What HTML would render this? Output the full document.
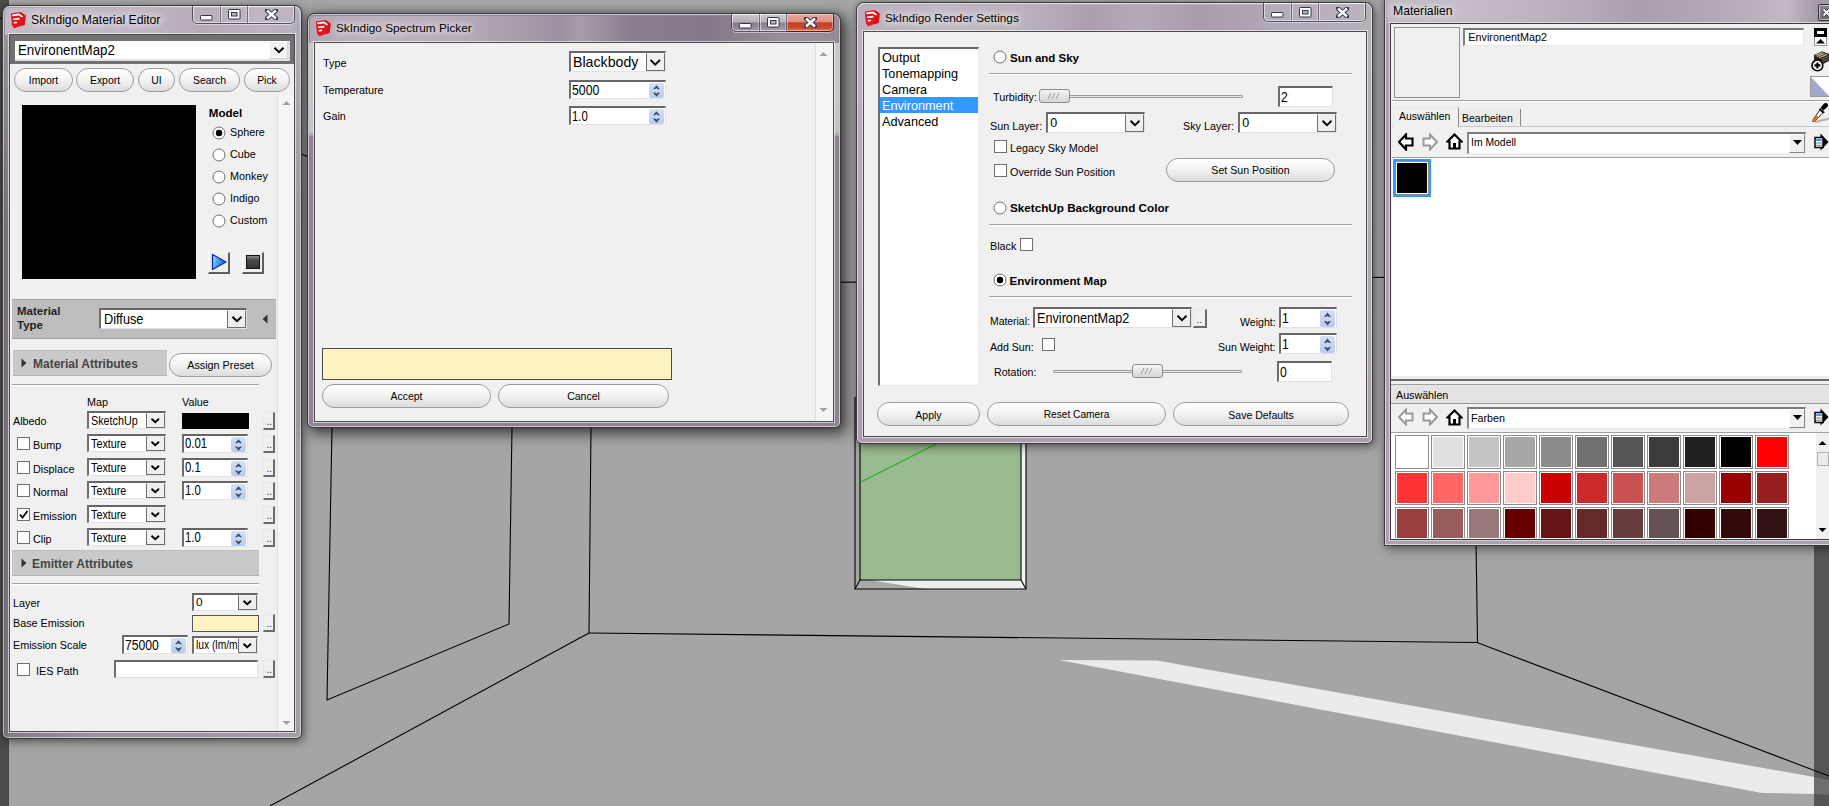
<!DOCTYPE html><html><head><meta charset="utf-8"><style>
html,body{margin:0;padding:0;width:1829px;height:806px;overflow:hidden;background:#a5a5a5;font-family:"Liberation Sans",sans-serif;}
div,svg{position:absolute;}
.t{white-space:nowrap;}
.a{position:absolute;}
.win{border-radius:7px 7px 5px 5px;box-shadow:0 0 0 1px #3c3c3c,2px 3px 10px 1px rgba(0,0,0,0.45),0 0 5px rgba(0,0,0,0.25);background:linear-gradient(90deg,rgba(255,255,255,0.0) 0%,rgba(255,255,255,0.18) 15%,rgba(255,255,255,0.0) 30%,rgba(255,255,255,0.12) 55%,rgba(255,255,255,0) 75%),#b6abb9;}
.win::before{content:"";position:absolute;left:0;top:0;right:0;bottom:0;border-radius:inherit;box-shadow:inset 0 0 0 1px rgba(255,255,255,0.55);}
.client{background:#f0f0f0;box-shadow:0 0 0 1px #4b4b4b,0 0 0 2px rgba(255,255,255,0.6);}
</style></head><body>
<svg class="a" style="left:0;top:0" width="1829" height="806" viewBox="0 0 1829 806">
<rect x="0" y="0" width="1829" height="806" fill="#a5a5a5"/>
<polygon points="1059,660 1157,660.5 1814,777 1814,794 1762,793" fill="#ebebeb"/>
<rect x="0" y="0" width="9" height="806" fill="#4a4a4a"/>
<rect x="1814" y="546" width="15" height="260" fill="#555"/>
<polygon points="1814,777 1829,780 1829,795 1814,794" fill="#6e6e6e"/>
<polygon points="860,440 1021,440 1021,580 860,580" fill="#9aba8f"/>
<polygon points="855,430 860,430 860,580 855,589" fill="#a5a5a5"/>
<polygon points="1021,440 1026,440 1026,589 1021,580" fill="#f2f2f2"/>
<polygon points="860,580 1021,580 1026,589 855,589" fill="#eeeeee"/>
<polygon points="860,580 870,580 925,589 856,589" fill="#a9a9a9"/>
<g stroke="#000" stroke-width="1.1" fill="none">
<polyline points="332,427 327,700 509,624 512,427"/>
<line x1="591" y1="427" x2="589" y2="633"/>
<polyline points="0,18 591,284.5 1476,276.5"/>
<line x1="589" y1="633" x2="270" y2="806"/>
<polyline points="589,633 1477,642.5 1829,776"/>
<line x1="1476" y1="540" x2="1477.5" y2="642.5"/>
<polyline points="855,397 855,589 1026,589 1026,440"/>
<polyline points="860,440 860,580 1021,580 1021,440"/>
<line x1="855" y1="589" x2="860" y2="580"/>
<line x1="1026" y1="589" x2="1021" y2="580"/>
</g>
<line x1="861" y1="482" x2="938" y2="443" stroke="#19b419" stroke-width="1.1"/>
</svg>
<div class="win" style="left:3px;top:6px;width:298px;height:732px;background:linear-gradient(180deg,rgba(255,255,255,0.3) 0,rgba(255,255,255,0.2) 60px,rgba(255,255,255,0) 220px),linear-gradient(90deg,#6c636f 0,#857a88 7px,#9d91a0 30%,#a69aa9 100%);"></div>
<div style="left:5px;top:8px;width:294px;height:27px;border-radius:5px 5px 0 0;background:linear-gradient(90deg,rgba(200,190,203,0.9) 0,#c3b9c5 40px,#bfb5c1 150px,#b5aab7 200px,#bdb3bf 260px,#b9aebb 100%);"></div>
<svg class="a" style="left:10px;top:11px" width="17" height="18" viewBox="0 0 17 18"><path d="M0.8 2.4 L10.5 1 L15.6 4.4 L14.8 13.8 L4.2 17.2 L2 14.2 Z" fill="#e8141c"/><path d="M10.5 1 L15.6 4.4 L14.8 13.8 L10.8 15 Z" fill="#d81018"/><path d="M2.2 3.4 L9.2 2.6 L13 5.2 L12.3 6.6 L8.6 4.6 L2.4 5.3 Z" fill="#fff"/><path d="M3 7.4 L9.3 6.8 L9.6 8.5 L3.2 9.1 Z" fill="#fff"/><path d="M3.6 10.9 L6.8 10.6 L6.9 12.2 L3.8 12.5 Z" fill="#fff"/></svg>
<div class="t" style="left:31px;top:13.67px;font-size:12.2px;line-height:12.2px;font-weight:normal;color:#000;text-shadow:0 0 6px rgba(255,255,255,0.9),0 0 10px rgba(255,255,255,0.8),0 0 14px rgba(255,255,255,0.6);">SkIndigo Material Editor</div>
<div style="left:192px;top:6px;width:103px;height:18px;border:1px solid rgba(50,45,60,0.75);border-top:none;border-radius:0 0 5px 5px;box-shadow:inset 0 0 0 1px rgba(255,255,255,0.55),0 1px 0 rgba(255,255,255,0.45);box-sizing:border-box;background:rgba(255,255,255,0.06);"></div>
<div style="left:220px;top:6px;width:1px;height:17px;background:rgba(50,45,60,0.55);box-shadow:1px 0 0 rgba(255,255,255,0.55),-1px 0 0 rgba(255,255,255,0.3);"></div>
<div style="left:247px;top:6px;width:1px;height:17px;background:rgba(50,45,60,0.55);box-shadow:1px 0 0 rgba(255,255,255,0.55),-1px 0 0 rgba(255,255,255,0.3);"></div>
<svg class="a" style="left:199.5px;top:14.8px" width="13" height="6" viewBox="0 0 13 6"><rect x="0.5" y="0.5" width="11.5" height="4.5" rx="0.8" fill="#fff" stroke="#353548" stroke-width="1"/></svg>
<svg class="a" style="left:227.5px;top:9.3px" width="13" height="11" viewBox="0 0 13 11"><rect x="0.5" y="0.5" width="11.5" height="9.5" rx="0.8" fill="#fff" stroke="#353548" stroke-width="1"/><rect x="3.5" y="3.5" width="5.5" height="3.5" fill="#b8b2bc" stroke="#353548" stroke-width="1"/></svg>
<svg class="a" style="left:265.0px;top:9.3px" width="13" height="11" viewBox="0 0 13 11"><path d="M2 1.5 L11 9.5 M11 1.5 L2 9.5" stroke="#353548" stroke-width="4.4" stroke-linecap="square"/><path d="M2 1.5 L11 9.5 M11 1.5 L2 9.5" stroke="#fff" stroke-width="2.4" stroke-linecap="butt"/></svg>
<div class="client" style="left:10px;top:35px;width:284px;height:696px;"></div>
<div style="left:10px;top:35px;width:284px;height:29px;background:#717171;"></div>
<div style="left:15px;top:41px;width:275px;height:20px;background:#fff;border-bottom:2px solid #e3e3e3;border-right:2px solid #e3e3e3;box-sizing:border-box;"></div>
<div style="left:269px;top:41px;width:19px;height:18px;background:#f3f3f3;border:1px solid #fff;border-right-color:#d5d5d5;border-bottom-color:#d5d5d5;box-sizing:border-box;display:flex;align-items:center;justify-content:center;"><svg width="12" height="8" viewBox="-1 -1 12 8"><path d="M0.5 0.8 L5.0 5.2 L9.5 0.8" fill="none" stroke="#000" stroke-width="2"/></svg></div>
<div class="t" style="left:17.8px;top:43.15px;font-size:14px;line-height:14px;font-weight:normal;color:#000;transform:scaleX(0.95);transform-origin:0 0;">EnvironentMap2</div>
<div style="left:14px;top:68px;width:59px;height:24px;border:1px solid #9c9c9c;border-radius:12px;background:linear-gradient(#ffffff 0%,#f4f4f4 45%,#dcdcdc 100%);box-sizing:border-box;"></div>
<div class="t" style="left:14.00px;width:59px;text-align:center;top:76.20px;font-size:10.4px;line-height:10.4px;font-weight:normal;color:#000">Import</div>
<div style="left:76px;top:68px;width:58px;height:24px;border:1px solid #9c9c9c;border-radius:12px;background:linear-gradient(#ffffff 0%,#f4f4f4 45%,#dcdcdc 100%);box-sizing:border-box;"></div>
<div class="t" style="left:76.00px;width:58px;text-align:center;top:76.20px;font-size:10.4px;line-height:10.4px;font-weight:normal;color:#000">Export</div>
<div style="left:138px;top:68px;width:37px;height:24px;border:1px solid #9c9c9c;border-radius:12px;background:linear-gradient(#ffffff 0%,#f4f4f4 45%,#dcdcdc 100%);box-sizing:border-box;"></div>
<div class="t" style="left:138.00px;width:37px;text-align:center;top:76.20px;font-size:10.4px;line-height:10.4px;font-weight:normal;color:#000">UI</div>
<div style="left:179px;top:68px;width:61px;height:24px;border:1px solid #9c9c9c;border-radius:12px;background:linear-gradient(#ffffff 0%,#f4f4f4 45%,#dcdcdc 100%);box-sizing:border-box;"></div>
<div class="t" style="left:179.00px;width:61px;text-align:center;top:76.20px;font-size:10.4px;line-height:10.4px;font-weight:normal;color:#000">Search</div>
<div style="left:244px;top:68px;width:46px;height:24px;border:1px solid #9c9c9c;border-radius:12px;background:linear-gradient(#ffffff 0%,#f4f4f4 45%,#dcdcdc 100%);box-sizing:border-box;"></div>
<div class="t" style="left:244.00px;width:46px;text-align:center;top:76.20px;font-size:10.4px;line-height:10.4px;font-weight:normal;color:#000">Pick</div>
<div style="left:277px;top:95px;width:17px;height:636px;background:#f5f5f5;border-left:1px solid #e2e2e2;box-sizing:border-box;"></div>
<svg class="a" style="left:282px;top:100px" width="9" height="6" viewBox="0 0 9 6"><path d="M0.5 5 L4.5 1 L8.5 5 Z" fill="#a0a0a0"/></svg>
<svg class="a" style="left:282px;top:720px" width="9" height="6" viewBox="0 0 9 6"><path d="M0.5 1 L4.5 5 L8.5 1 Z" fill="#a0a0a0"/></svg>
<div style="left:22px;top:105px;width:174px;height:174px;background:#000;"></div>
<div class="t" style="left:208.8px;top:107.18px;font-size:11.6px;line-height:11.6px;font-weight:bold;color:#000;">Model</div>
<div style="left:211.5px;top:126px;width:14px;height:14px;"><svg width="14" height="14" viewBox="0 0 14 14"><circle cx="7" cy="7" r="6" fill="#fff" stroke="#6f6f6f" stroke-width="1"/><circle cx="7" cy="7" r="3.2" fill="#000"/></svg></div>
<div class="t" style="left:230px;top:127.06px;font-size:10.8px;line-height:10.8px;font-weight:normal;color:#000;">Sphere</div>
<div style="left:211.5px;top:148px;width:14px;height:14px;"><svg width="14" height="14" viewBox="0 0 14 14"><circle cx="7" cy="7" r="6" fill="#fff" stroke="#6f6f6f" stroke-width="1"/></svg></div>
<div class="t" style="left:230px;top:149.06px;font-size:10.8px;line-height:10.8px;font-weight:normal;color:#000;">Cube</div>
<div style="left:211.5px;top:170px;width:14px;height:14px;"><svg width="14" height="14" viewBox="0 0 14 14"><circle cx="7" cy="7" r="6" fill="#fff" stroke="#6f6f6f" stroke-width="1"/></svg></div>
<div class="t" style="left:230px;top:171.06px;font-size:10.8px;line-height:10.8px;font-weight:normal;color:#000;">Monkey</div>
<div style="left:211.5px;top:192px;width:14px;height:14px;"><svg width="14" height="14" viewBox="0 0 14 14"><circle cx="7" cy="7" r="6" fill="#fff" stroke="#6f6f6f" stroke-width="1"/></svg></div>
<div class="t" style="left:230px;top:193.06px;font-size:10.8px;line-height:10.8px;font-weight:normal;color:#000;">Indigo</div>
<div style="left:211.5px;top:214px;width:14px;height:14px;"><svg width="14" height="14" viewBox="0 0 14 14"><circle cx="7" cy="7" r="6" fill="#fff" stroke="#6f6f6f" stroke-width="1"/></svg></div>
<div class="t" style="left:230px;top:215.06px;font-size:10.8px;line-height:10.8px;font-weight:normal;color:#000;">Custom</div>
<div style="left:208px;top:252px;width:22px;height:22px;background:#f0f0f0;border:1px solid #fafafa;border-right:2px solid #5e5e5e;border-bottom:2px solid #5e5e5e;box-sizing:border-box;"></div>
<svg class="a" style="left:211px;top:253px" width="17" height="18" viewBox="0 0 17 18"><defs><linearGradient id="pg" x1="0" y1="0" x2="1" y2="0.3"><stop offset="0" stop-color="#bfe2ff"/><stop offset="0.45" stop-color="#4aa2f8"/><stop offset="1" stop-color="#1d6ee0"/></linearGradient></defs><path d="M1.5 1.5 L15 9 L1.5 16.5 Z" fill="url(#pg)" stroke="#0b2e9c" stroke-width="1.3" stroke-linejoin="round"/></svg>
<div style="left:242px;top:252px;width:22px;height:22px;background:#f0f0f0;border:1px solid #fafafa;border-right:2px solid #5e5e5e;border-bottom:2px solid #5e5e5e;box-sizing:border-box;"></div>
<div style="left:246px;top:255px;width:14px;height:14px;background:linear-gradient(#8a8a8a 0,#4a4a4a 35%,#333 100%);border:1px solid #111;box-sizing:border-box;"></div>
<div style="left:12px;top:299px;width:264px;height:40px;background:#bdbdbd;border-top:1px solid #a5a5a5;border-bottom:1px solid #a0a0a0;box-sizing:border-box;"></div>
<div class="t" style="left:17px;top:306.27px;font-size:11.5px;line-height:11.5px;font-weight:bold;color:#222;">Material</div>
<div class="t" style="left:17px;top:320.27px;font-size:11.5px;line-height:11.5px;font-weight:bold;color:#222;">Type</div>
<div style="left:99px;top:308px;width:148px;height:21px;background:#fff;border-top:2px solid #666;border-left:2px solid #6e6e6e;border-bottom:1px solid #e2e2e2;border-right:1px solid #e2e2e2;box-sizing:border-box;"></div>
<div style="left:227px;top:310px;width:19px;height:18px;background:#efefef;border:1px solid #6e6e6e;border-top-color:#f4f4f4;box-sizing:border-box;display:flex;align-items:center;justify-content:center;"><svg width="12" height="8" viewBox="-1 -1 12 8"><path d="M0.5 0.8 L5.0 5.2 L9.5 0.8" fill="none" stroke="#000" stroke-width="1.9"/></svg></div>
<div class="t" style="left:103.5px;top:311.75px;font-size:14px;line-height:14px;font-weight:normal;color:#000;transform:scaleX(0.91);transform-origin:0 0;">Diffuse</div>
<svg class="a" style="left:262px;top:314px" width="6" height="10" viewBox="0 0 6 10"><path d="M5.5 0.5 L0.5 5 L5.5 9.5 Z" fill="#333"/></svg>
<div style="left:13px;top:350px;width:154px;height:26px;background:#c9c9c9;border-top:1px solid #bdbdbd;border-bottom:1px solid #b5b5b5;box-sizing:border-box;"></div>
<svg class="a" style="left:21px;top:358px" width="6" height="10" viewBox="0 0 6 10"><path d="M0.5 0.5 L5.5 5 L0.5 9.5 Z" fill="#333"/></svg>
<div class="t" style="left:33px;top:357.84px;font-size:12px;line-height:12px;font-weight:bold;color:#444;">Material Attributes</div>
<div style="left:169px;top:353px;width:103px;height:24px;border:1px solid #9c9c9c;border-radius:12px;background:linear-gradient(#ffffff 0%,#f4f4f4 45%,#dcdcdc 100%);box-sizing:border-box;"></div>
<div class="t" style="left:169.00px;width:103px;text-align:center;top:359.86px;font-size:10.8px;line-height:10.8px;font-weight:normal;color:#000">Assign Preset</div>
<div style="left:12px;top:384px;width:247px;height:1px;background:#a0a0a0;box-shadow:0 1px 0 #fff;"></div>
<div class="t" style="left:87px;top:396.86px;font-size:10.8px;line-height:10.8px;font-weight:normal;color:#000;">Map</div>
<div class="t" style="left:182px;top:396.86px;font-size:10.8px;line-height:10.8px;font-weight:normal;color:#000;">Value</div>
<div class="t" style="left:13px;top:415.86px;font-size:10.8px;line-height:10.8px;font-weight:normal;color:#000;">Albedo</div>
<div style="left:87px;top:411px;width:79px;height:18px;background:#fff;border-top:2px solid #666;border-left:2px solid #6e6e6e;border-bottom:1px solid #e2e2e2;border-right:1px solid #e2e2e2;box-sizing:border-box;"></div>
<div style="left:146px;top:413px;width:19px;height:15px;background:#efefef;border:1px solid #6e6e6e;border-top-color:#f4f4f4;box-sizing:border-box;display:flex;align-items:center;justify-content:center;"><svg width="10.5" height="7" viewBox="-1 -1 10.5 7"><path d="M0.5 0.8 L4.25 4.2 L8.0 0.8" fill="none" stroke="#000" stroke-width="1.9"/></svg></div>
<div class="t" style="left:91.3px;top:414.50px;font-size:12.4px;line-height:12.4px;font-weight:normal;color:#000;transform:scaleX(0.87);transform-origin:0 0;">SketchUp</div>
<div style="left:182px;top:413px;width:67px;height:16px;background:#000;"></div>
<div style="left:263px;top:412px;width:12px;height:18px;background:#f0f0f0;border-top:1px solid #e9e9e9;border-left:1px solid #e9e9e9;border-right:2px solid #6a6a6a;border-bottom:2px solid #6a6a6a;box-sizing:border-box;"></div>
<div class="t" style="left:266.5px;top:416.54px;font-size:10px;line-height:10px;font-weight:normal;color:#402060;">..</div>
<div style="left:17px;top:437px;width:13px;height:13px;background:#fff;border:1px solid #6f6f6f;box-sizing:border-box;"></div>
<div class="t" style="left:33px;top:439.86px;font-size:10.8px;line-height:10.8px;font-weight:normal;color:#000;">Bump</div>
<div style="left:87px;top:434px;width:79px;height:18px;background:#fff;border-top:2px solid #666;border-left:2px solid #6e6e6e;border-bottom:1px solid #e2e2e2;border-right:1px solid #e2e2e2;box-sizing:border-box;"></div>
<div style="left:146px;top:436px;width:19px;height:15px;background:#efefef;border:1px solid #6e6e6e;border-top-color:#f4f4f4;box-sizing:border-box;display:flex;align-items:center;justify-content:center;"><svg width="10.5" height="7" viewBox="-1 -1 10.5 7"><path d="M0.5 0.8 L4.25 4.2 L8.0 0.8" fill="none" stroke="#000" stroke-width="1.9"/></svg></div>
<div class="t" style="left:91.3px;top:437.50px;font-size:12.4px;line-height:12.4px;font-weight:normal;color:#000;transform:scaleX(0.87);transform-origin:0 0;">Texture</div>
<div style="left:182px;top:434px;width:66px;height:19px;background:#fff;border-top:2px solid #666;border-left:2px solid #6e6e6e;border-bottom:1px solid #e2e2e2;border-right:1px solid #e2e2e2;box-sizing:border-box;"></div>
<div style="left:231px;top:437px;width:15px;height:15px;"><svg width="15" height="15" viewBox="0 0 15 15"><defs><linearGradient id="sg" x1="0" y1="0" x2="0" y2="1"><stop offset="0" stop-color="#d3e0f8"/><stop offset="1" stop-color="#b7cbf0"/></linearGradient></defs><rect x="0" y="0" width="15" height="15" rx="2" fill="url(#sg)"/><path d="M4 6.3 L7.5 2.2 L11 6.3 L9.3 6.3 L7.5 5.3 L5.7 6.3 Z" fill="#3d4b66"/><path d="M4 9.6 L7.5 13.7 L11 9.6 L9.3 9.6 L7.5 10.6 L5.7 9.6 Z" fill="#3d4b66"/></svg></div>
<div class="t" style="left:185px;top:436.15px;font-size:14px;line-height:14px;font-weight:normal;color:#000;transform:scaleX(0.81);transform-origin:0 0;">0.01</div>
<div style="left:263px;top:435px;width:12px;height:18px;background:#f0f0f0;border-top:1px solid #e9e9e9;border-left:1px solid #e9e9e9;border-right:2px solid #6a6a6a;border-bottom:2px solid #6a6a6a;box-sizing:border-box;"></div>
<div class="t" style="left:266.5px;top:439.54px;font-size:10px;line-height:10px;font-weight:normal;color:#402060;">..</div>
<div style="left:17px;top:461px;width:13px;height:13px;background:#fff;border:1px solid #6f6f6f;box-sizing:border-box;"></div>
<div class="t" style="left:33px;top:463.86px;font-size:10.8px;line-height:10.8px;font-weight:normal;color:#000;">Displace</div>
<div style="left:87px;top:458px;width:79px;height:18px;background:#fff;border-top:2px solid #666;border-left:2px solid #6e6e6e;border-bottom:1px solid #e2e2e2;border-right:1px solid #e2e2e2;box-sizing:border-box;"></div>
<div style="left:146px;top:460px;width:19px;height:15px;background:#efefef;border:1px solid #6e6e6e;border-top-color:#f4f4f4;box-sizing:border-box;display:flex;align-items:center;justify-content:center;"><svg width="10.5" height="7" viewBox="-1 -1 10.5 7"><path d="M0.5 0.8 L4.25 4.2 L8.0 0.8" fill="none" stroke="#000" stroke-width="1.9"/></svg></div>
<div class="t" style="left:91.3px;top:461.50px;font-size:12.4px;line-height:12.4px;font-weight:normal;color:#000;transform:scaleX(0.87);transform-origin:0 0;">Texture</div>
<div style="left:182px;top:458px;width:66px;height:19px;background:#fff;border-top:2px solid #666;border-left:2px solid #6e6e6e;border-bottom:1px solid #e2e2e2;border-right:1px solid #e2e2e2;box-sizing:border-box;"></div>
<div style="left:231px;top:461px;width:15px;height:15px;"><svg width="15" height="15" viewBox="0 0 15 15"><defs><linearGradient id="sg" x1="0" y1="0" x2="0" y2="1"><stop offset="0" stop-color="#d3e0f8"/><stop offset="1" stop-color="#b7cbf0"/></linearGradient></defs><rect x="0" y="0" width="15" height="15" rx="2" fill="url(#sg)"/><path d="M4 6.3 L7.5 2.2 L11 6.3 L9.3 6.3 L7.5 5.3 L5.7 6.3 Z" fill="#3d4b66"/><path d="M4 9.6 L7.5 13.7 L11 9.6 L9.3 9.6 L7.5 10.6 L5.7 9.6 Z" fill="#3d4b66"/></svg></div>
<div class="t" style="left:185px;top:460.15px;font-size:14px;line-height:14px;font-weight:normal;color:#000;transform:scaleX(0.81);transform-origin:0 0;">0.1</div>
<div style="left:263px;top:459px;width:12px;height:18px;background:#f0f0f0;border-top:1px solid #e9e9e9;border-left:1px solid #e9e9e9;border-right:2px solid #6a6a6a;border-bottom:2px solid #6a6a6a;box-sizing:border-box;"></div>
<div class="t" style="left:266.5px;top:463.54px;font-size:10px;line-height:10px;font-weight:normal;color:#402060;">..</div>
<div style="left:17px;top:484px;width:13px;height:13px;background:#fff;border:1px solid #6f6f6f;box-sizing:border-box;"></div>
<div class="t" style="left:33px;top:486.86px;font-size:10.8px;line-height:10.8px;font-weight:normal;color:#000;">Normal</div>
<div style="left:87px;top:481px;width:79px;height:18px;background:#fff;border-top:2px solid #666;border-left:2px solid #6e6e6e;border-bottom:1px solid #e2e2e2;border-right:1px solid #e2e2e2;box-sizing:border-box;"></div>
<div style="left:146px;top:483px;width:19px;height:15px;background:#efefef;border:1px solid #6e6e6e;border-top-color:#f4f4f4;box-sizing:border-box;display:flex;align-items:center;justify-content:center;"><svg width="10.5" height="7" viewBox="-1 -1 10.5 7"><path d="M0.5 0.8 L4.25 4.2 L8.0 0.8" fill="none" stroke="#000" stroke-width="1.9"/></svg></div>
<div class="t" style="left:91.3px;top:484.50px;font-size:12.4px;line-height:12.4px;font-weight:normal;color:#000;transform:scaleX(0.87);transform-origin:0 0;">Texture</div>
<div style="left:182px;top:481px;width:66px;height:19px;background:#fff;border-top:2px solid #666;border-left:2px solid #6e6e6e;border-bottom:1px solid #e2e2e2;border-right:1px solid #e2e2e2;box-sizing:border-box;"></div>
<div style="left:231px;top:484px;width:15px;height:15px;"><svg width="15" height="15" viewBox="0 0 15 15"><defs><linearGradient id="sg" x1="0" y1="0" x2="0" y2="1"><stop offset="0" stop-color="#d3e0f8"/><stop offset="1" stop-color="#b7cbf0"/></linearGradient></defs><rect x="0" y="0" width="15" height="15" rx="2" fill="url(#sg)"/><path d="M4 6.3 L7.5 2.2 L11 6.3 L9.3 6.3 L7.5 5.3 L5.7 6.3 Z" fill="#3d4b66"/><path d="M4 9.6 L7.5 13.7 L11 9.6 L9.3 9.6 L7.5 10.6 L5.7 9.6 Z" fill="#3d4b66"/></svg></div>
<div class="t" style="left:185px;top:483.15px;font-size:14px;line-height:14px;font-weight:normal;color:#000;transform:scaleX(0.81);transform-origin:0 0;">1.0</div>
<div style="left:263px;top:482px;width:12px;height:18px;background:#f0f0f0;border-top:1px solid #e9e9e9;border-left:1px solid #e9e9e9;border-right:2px solid #6a6a6a;border-bottom:2px solid #6a6a6a;box-sizing:border-box;"></div>
<div class="t" style="left:266.5px;top:486.54px;font-size:10px;line-height:10px;font-weight:normal;color:#402060;">..</div>
<div style="left:17px;top:508px;width:13px;height:13px;background:#fff;border:1px solid #6f6f6f;box-sizing:border-box;"><svg width="13" height="13" viewBox="0 0 13 13" style="position:absolute;left:-1px;top:-1px"><path d="M3 6.5 L5.5 9.5 L10.5 3" fill="none" stroke="#000" stroke-width="1.8"/></svg></div>
<div class="t" style="left:33px;top:510.86px;font-size:10.8px;line-height:10.8px;font-weight:normal;color:#000;">Emission</div>
<div style="left:87px;top:505px;width:79px;height:18px;background:#fff;border-top:2px solid #666;border-left:2px solid #6e6e6e;border-bottom:1px solid #e2e2e2;border-right:1px solid #e2e2e2;box-sizing:border-box;"></div>
<div style="left:146px;top:507px;width:19px;height:15px;background:#efefef;border:1px solid #6e6e6e;border-top-color:#f4f4f4;box-sizing:border-box;display:flex;align-items:center;justify-content:center;"><svg width="10.5" height="7" viewBox="-1 -1 10.5 7"><path d="M0.5 0.8 L4.25 4.2 L8.0 0.8" fill="none" stroke="#000" stroke-width="1.9"/></svg></div>
<div class="t" style="left:91.3px;top:508.50px;font-size:12.4px;line-height:12.4px;font-weight:normal;color:#000;transform:scaleX(0.87);transform-origin:0 0;">Texture</div>
<div style="left:263px;top:506px;width:12px;height:18px;background:#f0f0f0;border-top:1px solid #e9e9e9;border-left:1px solid #e9e9e9;border-right:2px solid #6a6a6a;border-bottom:2px solid #6a6a6a;box-sizing:border-box;"></div>
<div class="t" style="left:266.5px;top:510.54px;font-size:10px;line-height:10px;font-weight:normal;color:#402060;">..</div>
<div style="left:17px;top:531px;width:13px;height:13px;background:#fff;border:1px solid #6f6f6f;box-sizing:border-box;"></div>
<div class="t" style="left:33px;top:533.86px;font-size:10.8px;line-height:10.8px;font-weight:normal;color:#000;">Clip</div>
<div style="left:87px;top:528px;width:79px;height:18px;background:#fff;border-top:2px solid #666;border-left:2px solid #6e6e6e;border-bottom:1px solid #e2e2e2;border-right:1px solid #e2e2e2;box-sizing:border-box;"></div>
<div style="left:146px;top:530px;width:19px;height:15px;background:#efefef;border:1px solid #6e6e6e;border-top-color:#f4f4f4;box-sizing:border-box;display:flex;align-items:center;justify-content:center;"><svg width="10.5" height="7" viewBox="-1 -1 10.5 7"><path d="M0.5 0.8 L4.25 4.2 L8.0 0.8" fill="none" stroke="#000" stroke-width="1.9"/></svg></div>
<div class="t" style="left:91.3px;top:531.50px;font-size:12.4px;line-height:12.4px;font-weight:normal;color:#000;transform:scaleX(0.87);transform-origin:0 0;">Texture</div>
<div style="left:182px;top:528px;width:66px;height:19px;background:#fff;border-top:2px solid #666;border-left:2px solid #6e6e6e;border-bottom:1px solid #e2e2e2;border-right:1px solid #e2e2e2;box-sizing:border-box;"></div>
<div style="left:231px;top:531px;width:15px;height:15px;"><svg width="15" height="15" viewBox="0 0 15 15"><defs><linearGradient id="sg" x1="0" y1="0" x2="0" y2="1"><stop offset="0" stop-color="#d3e0f8"/><stop offset="1" stop-color="#b7cbf0"/></linearGradient></defs><rect x="0" y="0" width="15" height="15" rx="2" fill="url(#sg)"/><path d="M4 6.3 L7.5 2.2 L11 6.3 L9.3 6.3 L7.5 5.3 L5.7 6.3 Z" fill="#3d4b66"/><path d="M4 9.6 L7.5 13.7 L11 9.6 L9.3 9.6 L7.5 10.6 L5.7 9.6 Z" fill="#3d4b66"/></svg></div>
<div class="t" style="left:185px;top:530.15px;font-size:14px;line-height:14px;font-weight:normal;color:#000;transform:scaleX(0.81);transform-origin:0 0;">1.0</div>
<div style="left:263px;top:529px;width:12px;height:18px;background:#f0f0f0;border-top:1px solid #e9e9e9;border-left:1px solid #e9e9e9;border-right:2px solid #6a6a6a;border-bottom:2px solid #6a6a6a;box-sizing:border-box;"></div>
<div class="t" style="left:266.5px;top:533.53px;font-size:10px;line-height:10px;font-weight:normal;color:#402060;">..</div>
<div style="left:12px;top:550px;width:247px;height:26px;background:#c9c9c9;border-top:1px solid #bdbdbd;border-bottom:1px solid #b5b5b5;box-sizing:border-box;"></div>
<svg class="a" style="left:21px;top:558px" width="6" height="10" viewBox="0 0 6 10"><path d="M0.5 0.5 L5.5 5 L0.5 9.5 Z" fill="#333"/></svg>
<div class="t" style="left:32px;top:557.84px;font-size:12px;line-height:12px;font-weight:bold;color:#444;">Emitter Attributes</div>
<div style="left:12px;top:583px;width:247px;height:1px;background:#a0a0a0;box-shadow:0 1px 0 #fff;"></div>
<div class="t" style="left:13px;top:597.86px;font-size:10.8px;line-height:10.8px;font-weight:normal;color:#000;">Layer</div>
<div style="left:192px;top:593px;width:66px;height:18px;background:#fff;border-top:2px solid #666;border-left:2px solid #6e6e6e;border-bottom:1px solid #e2e2e2;border-right:1px solid #e2e2e2;box-sizing:border-box;"></div>
<div style="left:238px;top:595px;width:19px;height:15px;background:#efefef;border:1px solid #6e6e6e;border-top-color:#f4f4f4;box-sizing:border-box;display:flex;align-items:center;justify-content:center;"><svg width="10.5" height="7" viewBox="-1 -1 10.5 7"><path d="M0.5 0.8 L4.25 4.2 L8.0 0.8" fill="none" stroke="#000" stroke-width="1.9"/></svg></div>
<div class="t" style="left:196px;top:596.51px;font-size:11.8px;line-height:11.8px;font-weight:normal;color:#000;">0</div>
<div class="t" style="left:13px;top:617.86px;font-size:10.8px;line-height:10.8px;font-weight:normal;color:#000;">Base Emission</div>
<div style="left:192px;top:615px;width:67px;height:17px;background:#fff2c2;border:1px solid #555;box-sizing:border-box;"></div>
<div style="left:263px;top:614px;width:12px;height:18px;background:#f0f0f0;border-top:1px solid #e9e9e9;border-left:1px solid #e9e9e9;border-right:2px solid #6a6a6a;border-bottom:2px solid #6a6a6a;box-sizing:border-box;"></div>
<div class="t" style="left:266.5px;top:618.53px;font-size:10px;line-height:10px;font-weight:normal;color:#402060;">..</div>
<div class="t" style="left:13px;top:639.86px;font-size:10.8px;line-height:10.8px;font-weight:normal;color:#000;">Emission Scale</div>
<div style="left:122px;top:635px;width:66px;height:19px;background:#fff;border-top:2px solid #666;border-left:2px solid #6e6e6e;border-bottom:1px solid #e2e2e2;border-right:1px solid #e2e2e2;box-sizing:border-box;"></div>
<div style="left:171px;top:638px;width:15px;height:15px;"><svg width="15" height="15" viewBox="0 0 15 15"><defs><linearGradient id="sg" x1="0" y1="0" x2="0" y2="1"><stop offset="0" stop-color="#d3e0f8"/><stop offset="1" stop-color="#b7cbf0"/></linearGradient></defs><rect x="0" y="0" width="15" height="15" rx="2" fill="url(#sg)"/><path d="M4 6.3 L7.5 2.2 L11 6.3 L9.3 6.3 L7.5 5.3 L5.7 6.3 Z" fill="#3d4b66"/><path d="M4 9.6 L7.5 13.7 L11 9.6 L9.3 9.6 L7.5 10.6 L5.7 9.6 Z" fill="#3d4b66"/></svg></div>
<div class="t" style="left:125px;top:637.95px;font-size:14px;line-height:14px;font-weight:normal;color:#000;transform:scaleX(0.87);transform-origin:0 0;">75000</div>
<div style="left:192px;top:636px;width:66px;height:18px;background:#fff;border-top:2px solid #666;border-left:2px solid #6e6e6e;border-bottom:1px solid #e2e2e2;border-right:1px solid #e2e2e2;box-sizing:border-box;"></div>
<div style="left:238px;top:638px;width:19px;height:15px;background:#efefef;border:1px solid #6e6e6e;border-top-color:#f4f4f4;box-sizing:border-box;display:flex;align-items:center;justify-content:center;"><svg width="10.5" height="7" viewBox="-1 -1 10.5 7"><path d="M0.5 0.8 L4.25 4.2 L8.0 0.8" fill="none" stroke="#000" stroke-width="1.9"/></svg></div>
<div class="t" style="left:195.6px;top:639.22px;font-size:12.5px;line-height:12.5px;font-weight:normal;color:#000;transform:scaleX(0.82);transform-origin:0 0;">lux (lm/m</div>
<div style="left:17px;top:663px;width:13px;height:13px;background:#fff;border:1px solid #6f6f6f;box-sizing:border-box;"></div>
<div class="t" style="left:36px;top:665.86px;font-size:10.8px;line-height:10.8px;font-weight:normal;color:#000;">IES Path</div>
<div style="left:114px;top:660px;width:144px;height:18px;background:#fff;border-top:2px solid #666;border-left:2px solid #6e6e6e;border-bottom:1px solid #e2e2e2;border-right:1px solid #e2e2e2;box-sizing:border-box;"></div>
<div style="left:263px;top:660px;width:12px;height:18px;background:#f0f0f0;border-top:1px solid #e9e9e9;border-left:1px solid #e9e9e9;border-right:2px solid #6a6a6a;border-bottom:2px solid #6a6a6a;box-sizing:border-box;"></div>
<div class="t" style="left:266.5px;top:664.53px;font-size:10px;line-height:10px;font-weight:normal;color:#402060;">..</div>
<div class="win" style="left:308px;top:14px;width:532px;height:413px;box-shadow:0 0 0 1px #3a3a3a,4px 4px 14px 3px rgba(0,0,0,0.6),0 0 6px rgba(0,0,0,0.3);background:#8f8292;"></div>
<div style="left:310px;top:16px;width:528px;height:27px;border-radius:5px 5px 0 0;background:linear-gradient(90deg,#b3a8b5 0,#bcb2be 60px,#b6abb8 150px,#9d90a0 250px,#a89cab 270px,#8a7d8d 320px,#857888 400px,#9a8e9c 480px,#978a99 100%);"></div>
<div style="left:309px;top:43px;width:5px;height:93px;background:linear-gradient(180deg,rgba(255,255,255,0.55),rgba(255,255,255,0.5) 95%,rgba(255,255,255,0.2));"></div>
<div style="left:834px;top:43px;width:5px;height:93px;background:linear-gradient(180deg,rgba(255,255,255,0.55),rgba(255,255,255,0.5) 95%,rgba(255,255,255,0.2));"></div>
<svg class="a" style="left:315px;top:19px" width="17" height="18" viewBox="0 0 17 18"><path d="M0.8 2.4 L10.5 1 L15.6 4.4 L14.8 13.8 L4.2 17.2 L2 14.2 Z" fill="#e8141c"/><path d="M10.5 1 L15.6 4.4 L14.8 13.8 L10.8 15 Z" fill="#d81018"/><path d="M2.2 3.4 L9.2 2.6 L13 5.2 L12.3 6.6 L8.6 4.6 L2.4 5.3 Z" fill="#fff"/><path d="M3 7.4 L9.3 6.8 L9.6 8.5 L3.2 9.1 Z" fill="#fff"/><path d="M3.6 10.9 L6.8 10.6 L6.9 12.2 L3.8 12.5 Z" fill="#fff"/></svg>
<div class="t" style="left:336px;top:23.01px;font-size:11.8px;line-height:11.8px;font-weight:normal;color:#000;text-shadow:0 0 6px rgba(255,255,255,0.9),0 0 10px rgba(255,255,255,0.8),0 0 14px rgba(255,255,255,0.6);">SkIndigo Spectrum Picker</div>
<div style="left:731px;top:14px;width:103px;height:18px;border:1px solid rgba(50,45,60,0.75);border-top:none;border-radius:0 0 5px 5px;box-shadow:inset 0 0 0 1px rgba(255,255,255,0.55),0 1px 0 rgba(255,255,255,0.45);box-sizing:border-box;background:linear-gradient(180deg,rgba(255,255,255,0.55) 0,rgba(255,255,255,0.35) 48%,rgba(60,50,70,0.12) 52%,rgba(255,255,255,0.15) 100%);"></div>
<div style="left:759px;top:14px;width:1px;height:17px;background:rgba(50,45,60,0.55);box-shadow:1px 0 0 rgba(255,255,255,0.55),-1px 0 0 rgba(255,255,255,0.3);"></div>
<div style="left:786px;top:14px;width:1px;height:17px;background:rgba(50,45,60,0.55);box-shadow:1px 0 0 rgba(255,255,255,0.55),-1px 0 0 rgba(255,255,255,0.3);"></div>
<div style="left:787px;top:14px;width:47px;height:18px;border-radius:0 0 5px 0;background:linear-gradient(180deg,#e9aa9e 0,#dc8f80 45%,#c2402a 52%,#c8472d 80%,#e27a5a 100%);border:1px solid #5a1a12;border-top:none;border-left:none;box-sizing:border-box;box-shadow:inset 0 0 0 1px rgba(255,230,220,0.5);"></div>
<svg class="a" style="left:738.5px;top:22.8px" width="13" height="6" viewBox="0 0 13 6"><rect x="0.5" y="0.5" width="11.5" height="4.5" rx="0.8" fill="#fff" stroke="#353548" stroke-width="1"/></svg>
<svg class="a" style="left:766.5px;top:17.3px" width="13" height="11" viewBox="0 0 13 11"><rect x="0.5" y="0.5" width="11.5" height="9.5" rx="0.8" fill="#fff" stroke="#353548" stroke-width="1"/><rect x="3.5" y="3.5" width="5.5" height="3.5" fill="#b8b2bc" stroke="#353548" stroke-width="1"/></svg>
<svg class="a" style="left:804.0px;top:17.3px" width="13" height="11" viewBox="0 0 13 11"><path d="M2 1.5 L11 9.5 M11 1.5 L2 9.5" stroke="#353548" stroke-width="4.4" stroke-linecap="square"/><path d="M2 1.5 L11 9.5 M11 1.5 L2 9.5" stroke="#fff" stroke-width="2.4" stroke-linecap="butt"/></svg>
<div class="client" style="left:315px;top:43px;width:518px;height:378px;"></div>
<div style="left:815px;top:43px;width:18px;height:378px;background:#f5f5f5;border-left:1px solid #e2e2e2;box-sizing:border-box;"></div>
<svg class="a" style="left:819px;top:51px" width="9" height="6" viewBox="0 0 9 6"><path d="M0.5 5 L4.5 1 L8.5 5 Z" fill="#a0a0a0"/></svg>
<svg class="a" style="left:819px;top:407px" width="9" height="6" viewBox="0 0 9 6"><path d="M0.5 1 L4.5 5 L8.5 1 Z" fill="#a0a0a0"/></svg>
<div class="t" style="left:323px;top:57.86px;font-size:10.8px;line-height:10.8px;font-weight:normal;color:#000;">Type</div>
<div style="left:569px;top:51px;width:97px;height:21px;background:#fff;border-top:2px solid #666;border-left:2px solid #6e6e6e;border-bottom:1px solid #e2e2e2;border-right:1px solid #e2e2e2;box-sizing:border-box;"></div>
<div style="left:646px;top:53px;width:19px;height:18px;background:#efefef;border:1px solid #6e6e6e;border-top-color:#f4f4f4;box-sizing:border-box;display:flex;align-items:center;justify-content:center;"><svg width="12.5" height="8.4" viewBox="-1 -1 12.5 8.4"><path d="M0.5 0.8 L5.25 5.6000000000000005 L10.0 0.8" fill="none" stroke="#000" stroke-width="1.9"/></svg></div>
<div class="t" style="left:573px;top:54.58px;font-size:14.2px;line-height:14.2px;font-weight:normal;color:#000;">Blackbody</div>
<div class="t" style="left:323px;top:85.36px;font-size:10.8px;line-height:10.8px;font-weight:normal;color:#000;">Temperature</div>
<div style="left:569px;top:80px;width:97px;height:19px;background:#fff;border-top:2px solid #666;border-left:2px solid #6e6e6e;border-bottom:1px solid #e2e2e2;border-right:1px solid #e2e2e2;box-sizing:border-box;"></div>
<div style="left:649px;top:83px;width:15px;height:15px;"><svg width="15" height="15" viewBox="0 0 15 15"><defs><linearGradient id="sg" x1="0" y1="0" x2="0" y2="1"><stop offset="0" stop-color="#d3e0f8"/><stop offset="1" stop-color="#b7cbf0"/></linearGradient></defs><rect x="0" y="0" width="15" height="15" rx="2" fill="url(#sg)"/><path d="M4 6.3 L7.5 2.2 L11 6.3 L9.3 6.3 L7.5 5.3 L5.7 6.3 Z" fill="#3d4b66"/><path d="M4 9.6 L7.5 13.7 L11 9.6 L9.3 9.6 L7.5 10.6 L5.7 9.6 Z" fill="#3d4b66"/></svg></div>
<div class="t" style="left:572px;top:82.75px;font-size:14px;line-height:14px;font-weight:normal;color:#000;transform:scaleX(0.88);transform-origin:0 0;">5000</div>
<div class="t" style="left:323px;top:111.36px;font-size:10.8px;line-height:10.8px;font-weight:normal;color:#000;">Gain</div>
<div style="left:569px;top:106px;width:97px;height:19px;background:#fff;border-top:2px solid #666;border-left:2px solid #6e6e6e;border-bottom:1px solid #e2e2e2;border-right:1px solid #e2e2e2;box-sizing:border-box;"></div>
<div style="left:649px;top:109px;width:15px;height:15px;"><svg width="15" height="15" viewBox="0 0 15 15"><defs><linearGradient id="sg" x1="0" y1="0" x2="0" y2="1"><stop offset="0" stop-color="#d3e0f8"/><stop offset="1" stop-color="#b7cbf0"/></linearGradient></defs><rect x="0" y="0" width="15" height="15" rx="2" fill="url(#sg)"/><path d="M4 6.3 L7.5 2.2 L11 6.3 L9.3 6.3 L7.5 5.3 L5.7 6.3 Z" fill="#3d4b66"/><path d="M4 9.6 L7.5 13.7 L11 9.6 L9.3 9.6 L7.5 10.6 L5.7 9.6 Z" fill="#3d4b66"/></svg></div>
<div class="t" style="left:572px;top:108.85px;font-size:14px;line-height:14px;font-weight:normal;color:#000;transform:scaleX(0.81);transform-origin:0 0;">1.0</div>
<div style="left:322px;top:348px;width:350px;height:32px;background:#fff2c2;border:1px solid #4a4a4a;box-sizing:border-box;"></div>
<div style="left:322px;top:384px;width:169px;height:24px;border:1px solid #9c9c9c;border-radius:12px;background:linear-gradient(#ffffff 0%,#f4f4f4 45%,#dcdcdc 100%);box-sizing:border-box;"></div>
<div class="t" style="left:322.00px;width:169px;text-align:center;top:391.11px;font-size:10.5px;line-height:10.5px;font-weight:normal;color:#000">Accept</div>
<div style="left:498px;top:384px;width:171px;height:24px;border:1px solid #9c9c9c;border-radius:12px;background:linear-gradient(#ffffff 0%,#f4f4f4 45%,#dcdcdc 100%);box-sizing:border-box;"></div>
<div class="t" style="left:498.00px;width:171px;text-align:center;top:391.11px;font-size:10.5px;line-height:10.5px;font-weight:normal;color:#000">Cancel</div>
<div class="win" style="left:857px;top:3px;width:515px;height:440px;background:linear-gradient(180deg,#b9afbe 0,#b5abba 150px,#ab9fae 100%);"></div>
<div style="left:859px;top:5px;width:511px;height:27px;border-radius:5px 5px 0 0;background:linear-gradient(90deg,#bab0bc 0,#c2b8c4 80px,#bdb3bf 160px,#ab9fae 230px,#b4a9b7 280px,#a99dac 340px,#b3a8b5 420px,#b9afbb 100%);"></div>
<svg class="a" style="left:864px;top:9px" width="17" height="18" viewBox="0 0 17 18"><path d="M0.8 2.4 L10.5 1 L15.6 4.4 L14.8 13.8 L4.2 17.2 L2 14.2 Z" fill="#e8141c"/><path d="M10.5 1 L15.6 4.4 L14.8 13.8 L10.8 15 Z" fill="#d81018"/><path d="M2.2 3.4 L9.2 2.6 L13 5.2 L12.3 6.6 L8.6 4.6 L2.4 5.3 Z" fill="#fff"/><path d="M3 7.4 L9.3 6.8 L9.6 8.5 L3.2 9.1 Z" fill="#fff"/><path d="M3.6 10.9 L6.8 10.6 L6.9 12.2 L3.8 12.5 Z" fill="#fff"/></svg>
<div class="t" style="left:885px;top:12.61px;font-size:11.8px;line-height:11.8px;font-weight:normal;color:#000;text-shadow:0 0 6px rgba(255,255,255,0.9),0 0 10px rgba(255,255,255,0.8),0 0 14px rgba(255,255,255,0.6);">SkIndigo Render Settings</div>
<div style="left:1263px;top:3px;width:103px;height:19px;border:1px solid rgba(50,45,60,0.75);border-top:none;border-radius:0 0 5px 5px;box-shadow:inset 0 0 0 1px rgba(255,255,255,0.55),0 1px 0 rgba(255,255,255,0.45);box-sizing:border-box;background:rgba(255,255,255,0.06);"></div>
<div style="left:1291px;top:3px;width:1px;height:18px;background:rgba(50,45,60,0.55);box-shadow:1px 0 0 rgba(255,255,255,0.55),-1px 0 0 rgba(255,255,255,0.3);"></div>
<div style="left:1318px;top:3px;width:1px;height:18px;background:rgba(50,45,60,0.55);box-shadow:1px 0 0 rgba(255,255,255,0.55),-1px 0 0 rgba(255,255,255,0.3);"></div>
<svg class="a" style="left:1270.5px;top:12.3px" width="13" height="6" viewBox="0 0 13 6"><rect x="0.5" y="0.5" width="11.5" height="4.5" rx="0.8" fill="#fff" stroke="#353548" stroke-width="1"/></svg>
<svg class="a" style="left:1298.5px;top:6.8px" width="13" height="11" viewBox="0 0 13 11"><rect x="0.5" y="0.5" width="11.5" height="9.5" rx="0.8" fill="#fff" stroke="#353548" stroke-width="1"/><rect x="3.5" y="3.5" width="5.5" height="3.5" fill="#b8b2bc" stroke="#353548" stroke-width="1"/></svg>
<svg class="a" style="left:1336.0px;top:6.8px" width="13" height="11" viewBox="0 0 13 11"><path d="M2 1.5 L11 9.5 M11 1.5 L2 9.5" stroke="#353548" stroke-width="4.4" stroke-linecap="square"/><path d="M2 1.5 L11 9.5 M11 1.5 L2 9.5" stroke="#fff" stroke-width="2.4" stroke-linecap="butt"/></svg>
<div class="client" style="left:864px;top:32px;width:502px;height:404px;"></div>
<div style="left:878px;top:47px;width:101px;height:339px;background:#fff;border-top:2px solid #666;border-left:2px solid #6e6e6e;border-bottom:1px solid #eaeaea;border-right:1px solid #eaeaea;box-sizing:border-box;"></div>
<div style="left:880px;top:97px;width:98px;height:16px;background:#3399ff;"></div>
<div class="t" style="left:882px;top:51.55px;font-size:12.7px;line-height:12.7px;font-weight:normal;color:#000;">Output</div>
<div class="t" style="left:882px;top:67.55px;font-size:12.7px;line-height:12.7px;font-weight:normal;color:#000;">Tonemapping</div>
<div class="t" style="left:882px;top:83.55px;font-size:12.7px;line-height:12.7px;font-weight:normal;color:#000;">Camera</div>
<div class="t" style="left:882px;top:99.55px;font-size:12.7px;line-height:12.7px;font-weight:normal;color:#fff;">Environment</div>
<div class="t" style="left:882px;top:115.55px;font-size:12.7px;line-height:12.7px;font-weight:normal;color:#000;">Advanced</div>
<div style="left:992.5px;top:49.5px;width:14px;height:14px;"><svg width="14" height="14" viewBox="0 0 14 14"><circle cx="7" cy="7" r="6" fill="#fff" stroke="#6f6f6f" stroke-width="1"/></svg></div>
<div class="t" style="left:1010px;top:52.57px;font-size:11.5px;line-height:11.5px;font-weight:bold;color:#000;">Sun and Sky</div>
<div style="left:989px;top:73px;width:363px;height:1px;background:#a0a0a0;box-shadow:0 1px 0 #fff;"></div>
<div class="t" style="left:993px;top:91.86px;font-size:10.8px;line-height:10.8px;font-weight:normal;color:#000;">Turbidity:</div>
<div style="left:1069px;top:95px;width:174px;height:3px;background:#e7e7e7;border:1px solid #9a9a9a;box-sizing:border-box;border-radius:1px;"></div>
<div style="left:1039px;top:89px;width:31px;height:14px;background:linear-gradient(#f4f4f4,#d6d6d6);border:1px solid #8a8a8a;border-radius:3px;box-sizing:border-box;"></div>
<svg class="a" style="left:1047px;top:92px" width="14" height="8" viewBox="0 0 14 8"><path d="M1 7 L4 1 M5 7 L8 1 M9 7 L12 1" stroke="#9a9a9a" stroke-width="1"/></svg>
<div style="left:1278px;top:86px;width:55px;height:21px;background:#fff;border-top:2px solid #666;border-left:2px solid #6e6e6e;border-bottom:1px solid #e2e2e2;border-right:1px solid #e2e2e2;box-sizing:border-box;"></div>
<div class="t" style="left:1281px;top:89.65px;font-size:14px;line-height:14px;font-weight:normal;color:#000;transform:scaleX(0.87);transform-origin:0 0;">2</div>
<div class="t" style="left:990px;top:120.86px;font-size:10.8px;line-height:10.8px;font-weight:normal;color:#000;">Sun Layer:</div>
<div style="left:1046px;top:112px;width:99px;height:21px;background:#fff;border-top:2px solid #666;border-left:2px solid #6e6e6e;border-bottom:1px solid #e2e2e2;border-right:1px solid #e2e2e2;box-sizing:border-box;"></div>
<div style="left:1125px;top:114px;width:19px;height:18px;background:#efefef;border:1px solid #6e6e6e;border-top-color:#f4f4f4;box-sizing:border-box;display:flex;align-items:center;justify-content:center;"><svg width="12" height="8" viewBox="-1 -1 12 8"><path d="M0.5 0.8 L5.0 5.2 L9.5 0.8" fill="none" stroke="#000" stroke-width="1.9"/></svg></div>
<div class="t" style="left:1050.3px;top:116.82px;font-size:12.5px;line-height:12.5px;font-weight:normal;color:#000;">0</div>
<div class="t" style="left:1183px;top:120.86px;font-size:10.8px;line-height:10.8px;font-weight:normal;color:#000;">Sky Layer:</div>
<div style="left:1238px;top:112px;width:99px;height:21px;background:#fff;border-top:2px solid #666;border-left:2px solid #6e6e6e;border-bottom:1px solid #e2e2e2;border-right:1px solid #e2e2e2;box-sizing:border-box;"></div>
<div style="left:1317px;top:114px;width:19px;height:18px;background:#efefef;border:1px solid #6e6e6e;border-top-color:#f4f4f4;box-sizing:border-box;display:flex;align-items:center;justify-content:center;"><svg width="12" height="8" viewBox="-1 -1 12 8"><path d="M0.5 0.8 L5.0 5.2 L9.5 0.8" fill="none" stroke="#000" stroke-width="1.9"/></svg></div>
<div class="t" style="left:1242.3px;top:116.82px;font-size:12.5px;line-height:12.5px;font-weight:normal;color:#000;">0</div>
<div style="left:994px;top:140px;width:13px;height:13px;background:#fff;border:1px solid #6f6f6f;box-sizing:border-box;"></div>
<div class="t" style="left:1010px;top:142.86px;font-size:10.8px;line-height:10.8px;font-weight:normal;color:#000;">Legacy Sky Model</div>
<div style="left:994px;top:164px;width:13px;height:13px;background:#fff;border:1px solid #6f6f6f;box-sizing:border-box;"></div>
<div class="t" style="left:1010px;top:166.86px;font-size:10.8px;line-height:10.8px;font-weight:normal;color:#000;">Override Sun Position</div>
<div style="left:1166px;top:158px;width:169px;height:24px;border:1px solid #9c9c9c;border-radius:12px;background:linear-gradient(#ffffff 0%,#f4f4f4 45%,#dcdcdc 100%);box-sizing:border-box;"></div>
<div class="t" style="left:1166.00px;width:169px;text-align:center;top:165.03px;font-size:10.6px;line-height:10.6px;font-weight:normal;color:#000">Set Sun Position</div>
<div style="left:992.5px;top:201px;width:14px;height:14px;"><svg width="14" height="14" viewBox="0 0 14 14"><circle cx="7" cy="7" r="6" fill="#fff" stroke="#6f6f6f" stroke-width="1"/></svg></div>
<div class="t" style="left:1010px;top:202.30px;font-size:11.7px;line-height:11.7px;font-weight:bold;color:#000;">SketchUp Background Color</div>
<div style="left:989px;top:224px;width:363px;height:1px;background:#a0a0a0;box-shadow:0 1px 0 #fff;"></div>
<div class="t" style="left:990px;top:241.26px;font-size:10.8px;line-height:10.8px;font-weight:normal;color:#000;">Black</div>
<div style="left:1020px;top:238px;width:13px;height:13px;background:#fff;border:1px solid #6f6f6f;box-sizing:border-box;"></div>
<div style="left:992.5px;top:273px;width:14px;height:14px;"><svg width="14" height="14" viewBox="0 0 14 14"><circle cx="7" cy="7" r="6" fill="#fff" stroke="#6f6f6f" stroke-width="1"/><circle cx="7" cy="7" r="3.2" fill="#000"/></svg></div>
<div class="t" style="left:1009.5px;top:274.98px;font-size:11.6px;line-height:11.6px;font-weight:bold;color:#000;">Environment Map</div>
<div style="left:989px;top:296px;width:363px;height:1px;background:#a0a0a0;box-shadow:0 1px 0 #fff;"></div>
<div class="t" style="left:990px;top:317.20px;font-size:10.4px;line-height:10.4px;font-weight:normal;color:#000;">Material:</div>
<div style="left:1033px;top:307px;width:159px;height:21px;background:#fff;border-top:2px solid #666;border-left:2px solid #6e6e6e;border-bottom:1px solid #e2e2e2;border-right:1px solid #e2e2e2;box-sizing:border-box;"></div>
<div style="left:1172px;top:309px;width:19px;height:18px;background:#efefef;border:1px solid #6e6e6e;border-top-color:#f4f4f4;box-sizing:border-box;display:flex;align-items:center;justify-content:center;"><svg width="12" height="8" viewBox="-1 -1 12 8"><path d="M0.5 0.8 L5.0 5.2 L9.5 0.8" fill="none" stroke="#000" stroke-width="1.9"/></svg></div>
<div class="t" style="left:1037px;top:310.85px;font-size:14px;line-height:14px;font-weight:normal;color:#000;transform:scaleX(0.905);transform-origin:0 0;">EnvironentMap2</div>
<div style="left:1193px;top:309px;width:14px;height:19px;background:#f0f0f0;border-top:1px solid #e9e9e9;border-left:1px solid #e9e9e9;border-right:2px solid #6a6a6a;border-bottom:2px solid #6a6a6a;box-sizing:border-box;"></div>
<div class="t" style="left:1196.5px;top:314.54px;font-size:10px;line-height:10px;font-weight:normal;color:#402060;">..</div>
<div class="t" style="left:1240px;top:317.03px;font-size:10.6px;line-height:10.6px;font-weight:normal;color:#000;">Weight:</div>
<div style="left:1279px;top:307px;width:58px;height:21px;background:#fff;border-top:2px solid #666;border-left:2px solid #6e6e6e;border-bottom:1px solid #e2e2e2;border-right:1px solid #e2e2e2;box-sizing:border-box;"></div>
<div style="left:1320px;top:310px;width:15px;height:17px;"><svg width="15" height="17" viewBox="0 0 15 17"><defs><linearGradient id="sg" x1="0" y1="0" x2="0" y2="1"><stop offset="0" stop-color="#d3e0f8"/><stop offset="1" stop-color="#b7cbf0"/></linearGradient></defs><rect x="0" y="0" width="15" height="17" rx="2" fill="url(#sg)"/><path d="M4 7.1 L7.5 2.5 L11 7.1 L9.3 7.1 L7.5 6.1 L5.7 7.1 Z" fill="#3d4b66"/><path d="M4 10.9 L7.5 15.5 L11 10.9 L9.3 10.9 L7.5 11.9 L5.7 10.9 Z" fill="#3d4b66"/></svg></div>
<div class="t" style="left:1282px;top:310.85px;font-size:14px;line-height:14px;font-weight:normal;color:#000;transform:scaleX(0.87);transform-origin:0 0;">1</div>
<div class="t" style="left:990px;top:341.53px;font-size:10.6px;line-height:10.6px;font-weight:normal;color:#000;">Add Sun:</div>
<div style="left:1042px;top:338px;width:13px;height:13px;background:#fff;border:1px solid #6f6f6f;box-sizing:border-box;"></div>
<div class="t" style="left:1218px;top:342.03px;font-size:10.6px;line-height:10.6px;font-weight:normal;color:#000;">Sun Weight:</div>
<div style="left:1279px;top:333px;width:58px;height:21px;background:#fff;border-top:2px solid #666;border-left:2px solid #6e6e6e;border-bottom:1px solid #e2e2e2;border-right:1px solid #e2e2e2;box-sizing:border-box;"></div>
<div style="left:1320px;top:336px;width:15px;height:17px;"><svg width="15" height="17" viewBox="0 0 15 17"><defs><linearGradient id="sg" x1="0" y1="0" x2="0" y2="1"><stop offset="0" stop-color="#d3e0f8"/><stop offset="1" stop-color="#b7cbf0"/></linearGradient></defs><rect x="0" y="0" width="15" height="17" rx="2" fill="url(#sg)"/><path d="M4 7.1 L7.5 2.5 L11 7.1 L9.3 7.1 L7.5 6.1 L5.7 7.1 Z" fill="#3d4b66"/><path d="M4 10.9 L7.5 15.5 L11 10.9 L9.3 10.9 L7.5 11.9 L5.7 10.9 Z" fill="#3d4b66"/></svg></div>
<div class="t" style="left:1282px;top:337.15px;font-size:14px;line-height:14px;font-weight:normal;color:#000;transform:scaleX(0.87);transform-origin:0 0;">1</div>
<div class="t" style="left:994px;top:367.03px;font-size:10.6px;line-height:10.6px;font-weight:normal;color:#000;">Rotation:</div>
<div style="left:1053px;top:370px;width:189px;height:3px;background:#e7e7e7;border:1px solid #9a9a9a;box-sizing:border-box;border-radius:1px;"></div>
<div style="left:1132px;top:364px;width:31px;height:14px;background:linear-gradient(#f4f4f4,#d6d6d6);border:1px solid #8a8a8a;border-radius:3px;box-sizing:border-box;"></div>
<svg class="a" style="left:1140px;top:367px" width="14" height="8" viewBox="0 0 14 8"><path d="M1 7 L4 1 M5 7 L8 1 M9 7 L12 1" stroke="#9a9a9a" stroke-width="1"/></svg>
<div style="left:1277px;top:361px;width:55px;height:21px;background:#fff;border-top:2px solid #666;border-left:2px solid #6e6e6e;border-bottom:1px solid #e2e2e2;border-right:1px solid #e2e2e2;box-sizing:border-box;"></div>
<div class="t" style="left:1280px;top:364.75px;font-size:14px;line-height:14px;font-weight:normal;color:#000;transform:scaleX(0.87);transform-origin:0 0;">0</div>
<div style="left:877px;top:402px;width:103px;height:24px;border:1px solid #9c9c9c;border-radius:12px;background:linear-gradient(#ffffff 0%,#f4f4f4 45%,#dcdcdc 100%);box-sizing:border-box;"></div>
<div class="t" style="left:877.00px;width:103px;text-align:center;top:409.61px;font-size:10.5px;line-height:10.5px;font-weight:normal;color:#000">Apply</div>
<div style="left:987px;top:402px;width:179px;height:24px;border:1px solid #9c9c9c;border-radius:12px;background:linear-gradient(#ffffff 0%,#f4f4f4 45%,#dcdcdc 100%);box-sizing:border-box;"></div>
<div class="t" style="left:987.00px;width:179px;text-align:center;top:409.87px;font-size:10.2px;line-height:10.2px;font-weight:normal;color:#000">Reset Camera</div>
<div style="left:1173px;top:402px;width:176px;height:24px;border:1px solid #9c9c9c;border-radius:12px;background:linear-gradient(#ffffff 0%,#f4f4f4 45%,#dcdcdc 100%);box-sizing:border-box;"></div>
<div class="t" style="left:1173.00px;width:176px;text-align:center;top:409.61px;font-size:10.5px;line-height:10.5px;font-weight:normal;color:#000">Save Defaults</div>
<div class="win" style="left:1385px;top:-6px;width:460px;height:551px;border-radius:0;background:#ada1b0;"></div>
<div style="left:1387px;top:0px;width:442px;height:23px;background:linear-gradient(90deg,#c0b7c2 0,#c6bdc8 70px,#b9afbb 180px,#aa9fad 250px,#b3a9b6 330px,#c2b9c4 400px,#a49aa7 430px);"></div>
<div class="t" style="left:1393px;top:5.27px;font-size:12.2px;line-height:12.2px;font-weight:normal;color:#000;text-shadow:0 0 6px rgba(255,255,255,0.9),0 0 10px rgba(255,255,255,0.8),0 0 14px rgba(255,255,255,0.6);">Materialien</div>
<div style="left:1818px;top:4px;width:18px;height:17px;background:linear-gradient(#8a8290,#6f6874);border:1px solid #2e2e2e;border-radius:2px;box-sizing:border-box;box-shadow:inset 0 0 0 1px rgba(255,255,255,0.55);"></div>
<svg class="a" style="left:1822px;top:8px" width="9" height="9" viewBox="0 0 9 9"><path d="M1.5 1.5 L7.5 7.5 M7.5 1.5 L1.5 7.5" stroke="#2a2a40" stroke-width="3.4"/><path d="M1.5 1.5 L7.5 7.5 M7.5 1.5 L1.5 7.5" stroke="#fff" stroke-width="1.8"/></svg>
<div style="left:1391px;top:24px;width:440px;height:515px;background:#f0f0f0;box-shadow:0 0 0 1px #3c3c3c,0 0 0 2px rgba(255,255,255,0.5);overflow:hidden;"></div>
<div style="left:1394px;top:27px;width:66px;height:71px;background:#f0f0f0;border:1px solid #909090;box-sizing:border-box;"></div>
<div style="left:1463px;top:28px;width:341px;height:18px;background:#fff;border-top:2px solid #777;border-left:2px solid #808080;border-bottom:1px solid #e8e8e8;border-right:1px solid #e8e8e8;box-sizing:border-box;"></div>
<div class="t" style="left:1468.3px;top:32.36px;font-size:10.8px;line-height:10.8px;font-weight:normal;color:#000;">EnvironentMap2</div>
<div style="left:1814px;top:28px;width:13px;height:18px;background:#fff;border:1px solid #999;box-sizing:border-box;"></div>
<div style="left:1814px;top:28px;width:13px;height:9px;background:#000;"></div>
<div style="left:1817px;top:31px;width:7px;height:3px;background:#fff;"></div>
<svg class="a" style="left:1815px;top:38px" width="11" height="6" viewBox="0 0 11 6"><path d="M1 5.5 L5.5 1 L10 5.5 Z" fill="#000"/></svg>
<svg class="a" style="left:1811px;top:51px" width="18" height="21" viewBox="0 0 18 21"><path d="M3 4 L11 0.5 L18 3 L18 10 L10 14 L3 11 Z" fill="#2a261c"/><path d="M3 4 L11 0.5 L18 3 L10 6.5 Z" fill="#3a3426"/><path d="M4.5 4.2 L11.5 1.5 M6 5.6 L13.5 2.6 M8 6.8 L16 3.6" stroke="#c8bc8c" stroke-width="1.1"/><path d="M11 8 L17.5 5.5 M11 10.5 L17.5 8" stroke="#8a8060" stroke-width="0.9"/><circle cx="6.4" cy="14.4" r="5.4" fill="#fff" stroke="#000" stroke-width="1.6"/><path d="M3.4 14.4 H9.4 M6.4 11.4 V17.4" stroke="#000" stroke-width="2.1"/></svg>
<svg class="a" style="left:1810px;top:76px" width="19" height="21" viewBox="0 0 19 21"><rect x="0.5" y="0.5" width="19" height="20" fill="#fff" stroke="#999"/><path d="M1 1 L19 20 L1 20 Z" fill="#a4a9cc"/></svg>
<div style="left:1392px;top:100px;width:437px;height:1px;background:#a0a0a0;box-shadow:0 1px 0 #fff;"></div>
<svg class="a" style="left:1810px;top:102px" width="19" height="21" viewBox="0 0 19 21"><path d="M5 20 L19 16.5" stroke="#b4b4b4" stroke-width="2.2"/><path d="M9.8 8 L12.8 10.8 L5.2 18.8 L2.8 19.8 L3.4 17.2 Z" fill="#fff" stroke="#222" stroke-width="1"/><path d="M6.4 13.2 L8.8 15.2 L4.6 19.2 L2.6 20 L3.2 17.8 Z" fill="#f07010"/><path d="M8.8 7.4 L13.4 11.6 L14.8 10.2 L10.2 6 Z" fill="#111"/><path d="M10.6 5.8 L14 1.6 Q15.8 0.2 17.4 1.6 Q18.8 3.2 17.4 5 L13.2 8.6 Z" fill="#000"/></svg>
<div style="left:1392px;top:126px;width:437px;height:1px;background:#c8c8c8;"></div>
<div style="left:1393px;top:107px;width:66px;height:20px;background:#f0f0f0;border-top:1px solid #e8e8e8;border-right:1px solid #888;box-sizing:border-box;"></div>
<div style="left:1459px;top:109px;width:62px;height:17px;background:#ececec;border-right:1px solid #888;box-sizing:border-box;"></div>
<div class="t" style="left:1399px;top:111.11px;font-size:10.5px;line-height:10.5px;font-weight:normal;color:#000;">Auswählen</div>
<div class="t" style="left:1462px;top:112.71px;font-size:10.5px;line-height:10.5px;font-weight:normal;color:#000;">Bearbeiten</div>
<svg class="a" style="left:1398px;top:133px" width="16" height="18" viewBox="0 0 16 18"><path d="M1 9 L8 1.5 L8 5.5 L14.5 5.5 L14.5 12.5 L8 12.5 L8 16.5 Z" fill="#fff" stroke="#000" stroke-width="2.2" stroke-linejoin="miter"/></svg>
<svg class="a" style="left:1422px;top:133px" width="16" height="18" viewBox="0 0 16 18"><path d="M15 9 L8 1.5 L8 5.5 L1.5 5.5 L1.5 12.5 L8 12.5 L8 16.5 Z" fill="#fff" stroke="#9a9a9a" stroke-width="2" stroke-linejoin="miter"/></svg>
<svg class="a" style="left:1446px;top:133px" width="17" height="17" viewBox="0 0 17 17"><path d="M1.5 8.5 L8.5 1.5 L15.5 8.5 L13.5 8.5 L13.5 15.5 L3.5 15.5 L3.5 8.5 Z" fill="#fff" stroke="#000" stroke-width="2.2" stroke-linejoin="miter"/><rect x="7" y="10" width="3" height="6" fill="#000"/></svg>
<div style="left:1467px;top:132px;width:339px;height:22px;background:#fff;border-top:2px solid #7a7a7a;border-left:2px solid #8a8a8a;border-bottom:1px solid #e8e8e8;border-right:1px solid #e8e8e8;box-sizing:border-box;"></div>
<div style="left:1789px;top:134px;width:16px;height:19px;background:#f0f0f0;border:1px solid #fff;border-right-color:#888;border-bottom-color:#888;box-sizing:border-box;"></div>
<svg class="a" style="left:1793px;top:140px" width="9" height="6" viewBox="0 0 9 6"><path d="M0 0 L9 0 L4.5 5 Z" fill="#000"/></svg>
<div class="t" style="left:1471px;top:138.20px;font-size:10.4px;line-height:10.4px;font-weight:normal;color:#000;">Im Modell</div>
<svg class="a" style="left:1813px;top:133px" width="16" height="18" viewBox="0 0 16 18"><path d="M7.5 0.5 L15.5 9 L7.5 17.5 Z" fill="#000"/><rect x="2" y="4.5" width="8" height="10" fill="#fff" stroke="#000" stroke-width="1.5"/><rect x="3.2" y="5.8" width="5.6" height="2.2" fill="#3b9cf0"/><path d="M3.2 10 H8.8 M3.2 12.3 H8.8" stroke="#777" stroke-width="1"/></svg>
<div style="left:1392px;top:157px;width:437px;height:1px;background:#a0a0a0;"></div>
<div style="left:1392px;top:158px;width:437px;height:218px;background:#fff;"></div>
<div style="left:1393px;top:159px;width:38px;height:38px;background:#3399ff;"></div>
<div style="left:1395px;top:161px;width:34px;height:34px;background:#fff;border:1px solid #888;box-sizing:border-box;"></div>
<div style="left:1397px;top:163px;width:30px;height:30px;background:#000;"></div>
<div style="left:1391px;top:376px;width:438px;height:3px;background:#ececec;"></div>
<div style="left:1391px;top:379px;width:438px;height:2px;background:#6a6a6a;"></div>
<div style="left:1391px;top:381px;width:438px;height:3px;background:#f0f0f0;"></div>
<div style="left:1391px;top:384px;width:438px;height:1px;background:#a0a0a0;"></div>
<div style="left:1391px;top:385px;width:438px;height:18px;background:#e3e3e3;"></div>
<div style="left:1391px;top:403px;width:438px;height:1px;background:#9a9a9a;"></div>
<div class="t" style="left:1396px;top:389.94px;font-size:10.7px;line-height:10.7px;font-weight:normal;color:#000;">Auswählen</div>
<svg class="a" style="left:1398px;top:408px" width="16" height="18" viewBox="0 0 16 18"><path d="M1 9 L8 1.5 L8 5.5 L14.5 5.5 L14.5 12.5 L8 12.5 L8 16.5 Z" fill="#fff" stroke="#9a9a9a" stroke-width="2" stroke-linejoin="miter"/></svg>
<svg class="a" style="left:1422px;top:408px" width="16" height="18" viewBox="0 0 16 18"><path d="M15 9 L8 1.5 L8 5.5 L1.5 5.5 L1.5 12.5 L8 12.5 L8 16.5 Z" fill="#fff" stroke="#9a9a9a" stroke-width="2" stroke-linejoin="miter"/></svg>
<svg class="a" style="left:1446px;top:409px" width="17" height="17" viewBox="0 0 17 17"><path d="M1.5 8.5 L8.5 1.5 L15.5 8.5 L13.5 8.5 L13.5 15.5 L3.5 15.5 L3.5 8.5 Z" fill="#fff" stroke="#000" stroke-width="2.2" stroke-linejoin="miter"/><rect x="7" y="10" width="3" height="6" fill="#000"/></svg>
<div style="left:1467px;top:407px;width:339px;height:22px;background:#fff;border-top:2px solid #7a7a7a;border-left:2px solid #8a8a8a;border-bottom:1px solid #e8e8e8;border-right:1px solid #e8e8e8;box-sizing:border-box;"></div>
<div style="left:1789px;top:409px;width:16px;height:19px;background:#f0f0f0;border:1px solid #fff;border-right-color:#888;border-bottom-color:#888;box-sizing:border-box;"></div>
<svg class="a" style="left:1793px;top:415px" width="9" height="6" viewBox="0 0 9 6"><path d="M0 0 L9 0 L4.5 5 Z" fill="#000"/></svg>
<div class="t" style="left:1471px;top:412.94px;font-size:10.7px;line-height:10.7px;font-weight:normal;color:#000;">Farben</div>
<svg class="a" style="left:1813px;top:408px" width="16" height="18" viewBox="0 0 16 18"><path d="M7.5 0.5 L15.5 9 L7.5 17.5 Z" fill="#000"/><rect x="2" y="4.5" width="8" height="10" fill="#fff" stroke="#000" stroke-width="1.5"/><rect x="3.2" y="5.8" width="5.6" height="2.2" fill="#3b9cf0"/><path d="M3.2 10 H8.8 M3.2 12.3 H8.8" stroke="#777" stroke-width="1"/></svg>
<div style="left:1391px;top:432px;width:438px;height:1px;background:#a0a0a0;"></div>
<div style="left:1391px;top:433px;width:438px;height:106px;background:#fff;"></div>
<div style="left:1395px;top:435px;width:34px;height:34px;background:#ffffff;border:1px solid #8c8c8c;box-shadow:inset 0 0 0 1px #fff;box-sizing:border-box;"></div>
<div style="left:1431px;top:435px;width:34px;height:34px;background:#e0e0e0;border:1px solid #8c8c8c;box-shadow:inset 0 0 0 1px #fff;box-sizing:border-box;"></div>
<div style="left:1467px;top:435px;width:34px;height:34px;background:#c4c4c4;border:1px solid #8c8c8c;box-shadow:inset 0 0 0 1px #fff;box-sizing:border-box;"></div>
<div style="left:1503px;top:435px;width:34px;height:34px;background:#a6a6a6;border:1px solid #8c8c8c;box-shadow:inset 0 0 0 1px #fff;box-sizing:border-box;"></div>
<div style="left:1539px;top:435px;width:34px;height:34px;background:#8a8a8a;border:1px solid #8c8c8c;box-shadow:inset 0 0 0 1px #fff;box-sizing:border-box;"></div>
<div style="left:1575px;top:435px;width:34px;height:34px;background:#717171;border:1px solid #8c8c8c;box-shadow:inset 0 0 0 1px #fff;box-sizing:border-box;"></div>
<div style="left:1611px;top:435px;width:34px;height:34px;background:#565656;border:1px solid #8c8c8c;box-shadow:inset 0 0 0 1px #fff;box-sizing:border-box;"></div>
<div style="left:1647px;top:435px;width:34px;height:34px;background:#3c3c3c;border:1px solid #8c8c8c;box-shadow:inset 0 0 0 1px #fff;box-sizing:border-box;"></div>
<div style="left:1683px;top:435px;width:34px;height:34px;background:#202020;border:1px solid #8c8c8c;box-shadow:inset 0 0 0 1px #fff;box-sizing:border-box;"></div>
<div style="left:1719px;top:435px;width:34px;height:34px;background:#000000;border:1px solid #8c8c8c;box-shadow:inset 0 0 0 1px #fff;box-sizing:border-box;"></div>
<div style="left:1755px;top:435px;width:34px;height:34px;background:#ff0000;border:1px solid #8c8c8c;box-shadow:inset 0 0 0 1px #fff;box-sizing:border-box;"></div>
<div style="left:1395px;top:471px;width:34px;height:34px;background:#ff3333;border:1px solid #8c8c8c;box-shadow:inset 0 0 0 1px #fff;box-sizing:border-box;"></div>
<div style="left:1431px;top:471px;width:34px;height:34px;background:#ff6666;border:1px solid #8c8c8c;box-shadow:inset 0 0 0 1px #fff;box-sizing:border-box;"></div>
<div style="left:1467px;top:471px;width:34px;height:34px;background:#ff9999;border:1px solid #8c8c8c;box-shadow:inset 0 0 0 1px #fff;box-sizing:border-box;"></div>
<div style="left:1503px;top:471px;width:34px;height:34px;background:#ffcccc;border:1px solid #8c8c8c;box-shadow:inset 0 0 0 1px #fff;box-sizing:border-box;"></div>
<div style="left:1539px;top:471px;width:34px;height:34px;background:#cc0000;border:1px solid #8c8c8c;box-shadow:inset 0 0 0 1px #fff;box-sizing:border-box;"></div>
<div style="left:1575px;top:471px;width:34px;height:34px;background:#cc2929;border:1px solid #8c8c8c;box-shadow:inset 0 0 0 1px #fff;box-sizing:border-box;"></div>
<div style="left:1611px;top:471px;width:34px;height:34px;background:#cc5252;border:1px solid #8c8c8c;box-shadow:inset 0 0 0 1px #fff;box-sizing:border-box;"></div>
<div style="left:1647px;top:471px;width:34px;height:34px;background:#cc7a7a;border:1px solid #8c8c8c;box-shadow:inset 0 0 0 1px #fff;box-sizing:border-box;"></div>
<div style="left:1683px;top:471px;width:34px;height:34px;background:#cca3a3;border:1px solid #8c8c8c;box-shadow:inset 0 0 0 1px #fff;box-sizing:border-box;"></div>
<div style="left:1719px;top:471px;width:34px;height:34px;background:#990000;border:1px solid #8c8c8c;box-shadow:inset 0 0 0 1px #fff;box-sizing:border-box;"></div>
<div style="left:1755px;top:471px;width:34px;height:34px;background:#991f1f;border:1px solid #8c8c8c;box-shadow:inset 0 0 0 1px #fff;box-sizing:border-box;"></div>
<div style="left:1395px;top:507px;width:34px;height:31px;background:#993d3d;border:1px solid #8c8c8c;border-bottom:none;box-shadow:inset 1px 1px 0 #fff,inset -1px 0 0 #fff;box-sizing:border-box;"></div>
<div style="left:1431px;top:507px;width:34px;height:31px;background:#995c5c;border:1px solid #8c8c8c;border-bottom:none;box-shadow:inset 1px 1px 0 #fff,inset -1px 0 0 #fff;box-sizing:border-box;"></div>
<div style="left:1467px;top:507px;width:34px;height:31px;background:#997a7a;border:1px solid #8c8c8c;border-bottom:none;box-shadow:inset 1px 1px 0 #fff,inset -1px 0 0 #fff;box-sizing:border-box;"></div>
<div style="left:1503px;top:507px;width:34px;height:31px;background:#660000;border:1px solid #8c8c8c;border-bottom:none;box-shadow:inset 1px 1px 0 #fff,inset -1px 0 0 #fff;box-sizing:border-box;"></div>
<div style="left:1539px;top:507px;width:34px;height:31px;background:#661414;border:1px solid #8c8c8c;border-bottom:none;box-shadow:inset 1px 1px 0 #fff,inset -1px 0 0 #fff;box-sizing:border-box;"></div>
<div style="left:1575px;top:507px;width:34px;height:31px;background:#662929;border:1px solid #8c8c8c;border-bottom:none;box-shadow:inset 1px 1px 0 #fff,inset -1px 0 0 #fff;box-sizing:border-box;"></div>
<div style="left:1611px;top:507px;width:34px;height:31px;background:#663d3d;border:1px solid #8c8c8c;border-bottom:none;box-shadow:inset 1px 1px 0 #fff,inset -1px 0 0 #fff;box-sizing:border-box;"></div>
<div style="left:1647px;top:507px;width:34px;height:31px;background:#665252;border:1px solid #8c8c8c;border-bottom:none;box-shadow:inset 1px 1px 0 #fff,inset -1px 0 0 #fff;box-sizing:border-box;"></div>
<div style="left:1683px;top:507px;width:34px;height:31px;background:#330000;border:1px solid #8c8c8c;border-bottom:none;box-shadow:inset 1px 1px 0 #fff,inset -1px 0 0 #fff;box-sizing:border-box;"></div>
<div style="left:1719px;top:507px;width:34px;height:31px;background:#330a0a;border:1px solid #8c8c8c;border-bottom:none;box-shadow:inset 1px 1px 0 #fff,inset -1px 0 0 #fff;box-sizing:border-box;"></div>
<div style="left:1755px;top:507px;width:34px;height:31px;background:#331414;border:1px solid #8c8c8c;border-bottom:none;box-shadow:inset 1px 1px 0 #fff,inset -1px 0 0 #fff;box-sizing:border-box;"></div>
<div style="left:1816px;top:433px;width:13px;height:106px;background:#f0f0f0;"></div>
<svg class="a" style="left:1818px;top:440px" width="9" height="6" viewBox="0 0 9 6"><path d="M0.5 5 L4.5 1 L8.5 5 Z" fill="#000"/></svg>
<div style="left:1817px;top:452px;width:12px;height:14px;background:#eaeaea;border:1px solid #b0b0b0;box-sizing:border-box;"></div>
<svg class="a" style="left:1818px;top:527px" width="9" height="6" viewBox="0 0 9 6"><path d="M0.5 1 L4.5 5 L8.5 1 Z" fill="#000"/></svg>
</body></html>
